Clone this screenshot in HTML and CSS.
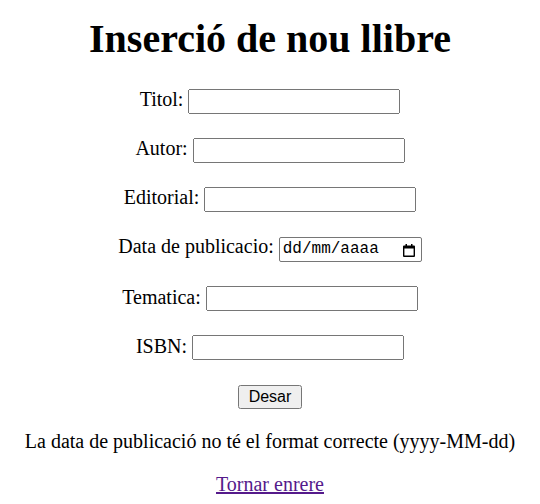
FILE: index.html
```html
<!DOCTYPE html>
<html lang="ca">
<head>
<meta charset="utf-8">
<title>Inserció de nou llibre</title>
<link rel="stylesheet" href="styles.css">
</head>
<body>
<h1 class="title">Inserció de nou llibre</h1>
<form class="form">
  <p class="row"><label for="titol">Titol:</label> <input class="field" type="text" id="titol"></p>
  <p class="row"><label for="autor">Autor:</label> <input class="field" type="text" id="autor"></p>
  <p class="row"><label for="editorial">Editorial:</label> <input class="field" type="text" id="editorial"></p>
  <p class="row"><label for="data">Data de publicacio:</label> <span class="date" id="data" role="textbox" tabindex="0"><span class="date-text">dd/mm/aaaa</span><svg class="cal" width="12" height="13" viewBox="0 0 12 13" aria-hidden="true"><path d="M2.5 0h1.5v2H2.5zM8 0h1.5v2H8z"/><path fill-rule="evenodd" d="M1 1.5h10a1 1 0 0 1 1 1V12a1 1 0 0 1-1 1H1a1 1 0 0 1-1-1V2.5a1 1 0 0 1 1-1zM1.4 4.6V11.6h9.2V4.6z"/></svg></span></p>
  <p class="row"><label for="tematica">Tematica:</label> <input class="field" type="text" id="tematica"></p>
  <p class="row"><label for="isbn">ISBN:</label> <input class="field" type="text" id="isbn"></p>
  <p class="row row-last"><button class="btn" type="button">Desar</button></p>
</form>
<p class="error">La data de publicació no té el format correcte (yyyy-MM-dd)</p>
<p class="back"><a class="link" href="#">Tornar enrere</a></p>
</body>
</html>
```
FILE: styles.css
```css
html, body {
  background: #fff;
}
body {
  margin: 0 8px;
  font-family: "Liberation Serif", "Times New Roman", serif;
  font-size: 20px;
  color: #000;
  text-align: center;
}
.title {
  font-size: 40px;
  font-weight: bold;
  margin: 15px 0 26px;
}
.form {
  margin: 0;
}
.row {
  margin: 23.5px 0;
}
.row-last {
  margin-bottom: 21px;
}
.field {
  box-sizing: border-box;
  width: 212px;
  height: 25px;
  font-family: "Liberation Sans", Arial, sans-serif;
  font-size: 16px;
  padding: 1px 2px;
  margin: 0;
}
.date {
  box-sizing: border-box;
  display: inline-flex;
  align-items: center;
  justify-content: space-between;
  width: 143px;
  height: 25px;
  padding: 0 6px 0 3px;
  border: 1px solid #767676;
  border-radius: 2px;
  background: #fff;
  font-family: "Liberation Mono", "DejaVu Sans Mono", monospace;
  font-size: 16px;
  line-height: 23px;
  color: #000;
}
.date-text {
  display: block;
}
.cal {
  display: block;
  fill: #000;
  margin-top: 1px;
}
.btn {
  font-family: "Liberation Sans", Arial, sans-serif;
  font-size: 16px;
  padding: 1px 9px;
  height: 24px;
}
.error {
  margin: 20px 0;
}
.back {
  margin: 20px 0;
}
.link {
  color: #551a8b;
}
```
